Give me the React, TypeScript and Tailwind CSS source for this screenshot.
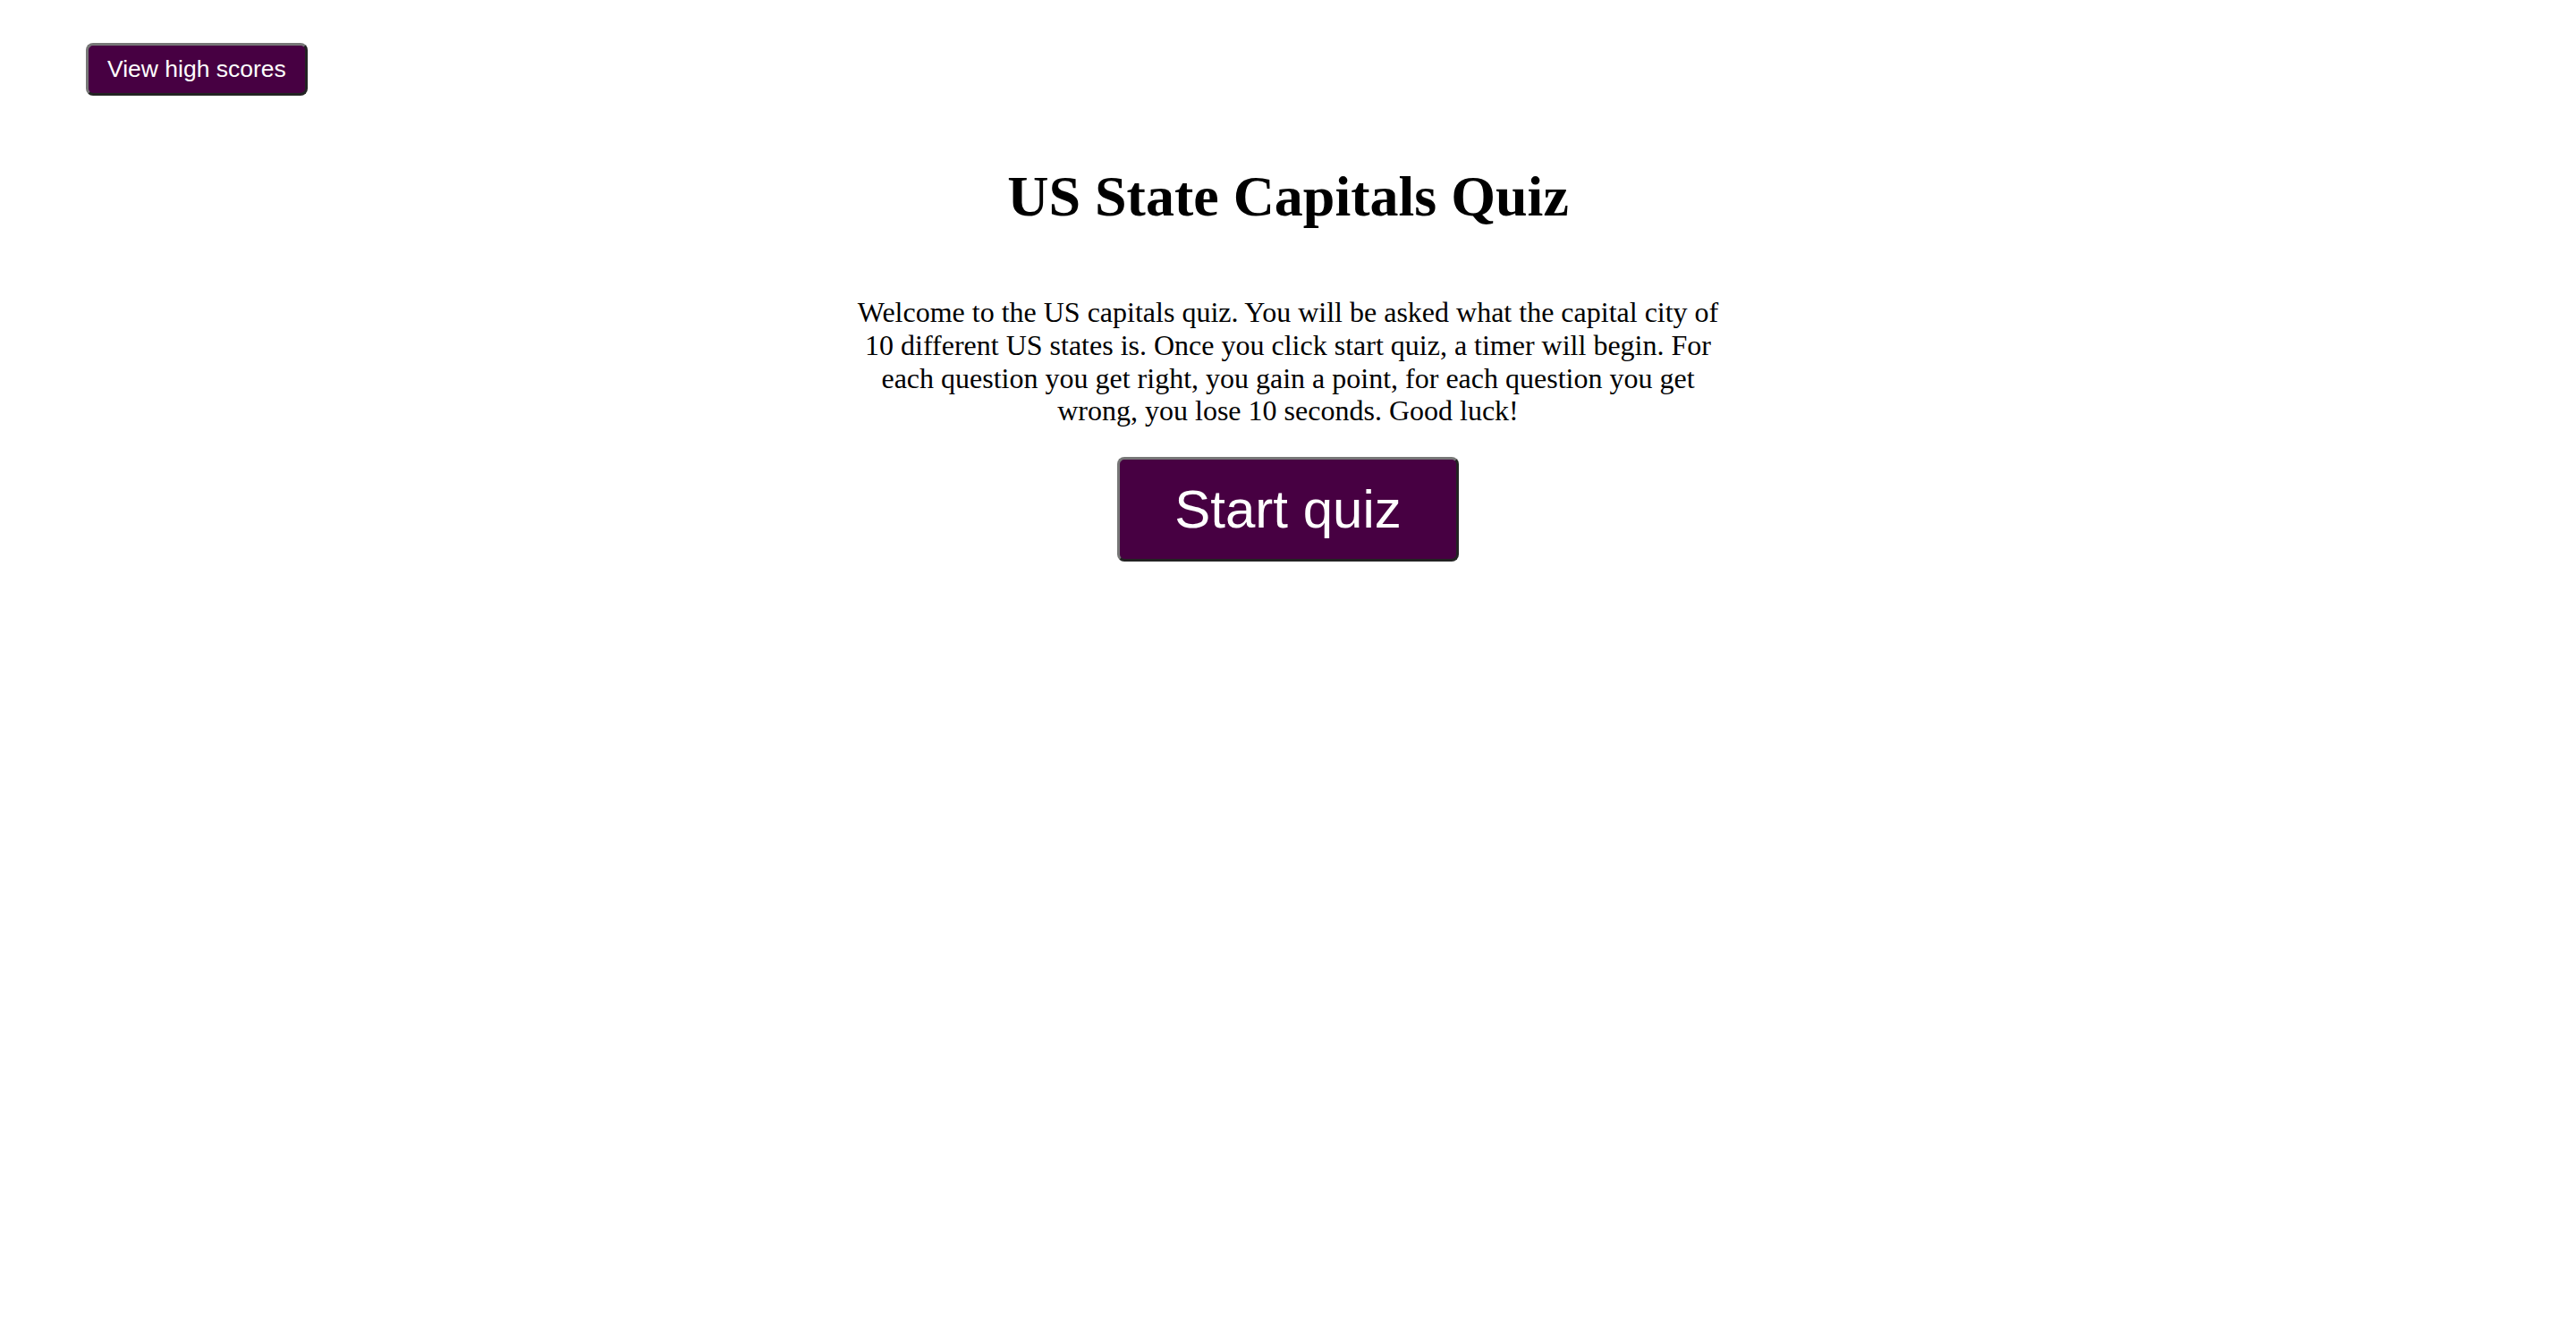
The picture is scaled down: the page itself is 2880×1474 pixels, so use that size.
import React from 'react';

const serif = "font-['Liberation_Serif','Times_New_Roman',serif]";
const sans = "font-['Liberation_Sans',Arial,sans-serif]";

const btnBorder =
  'border-[3px] border-solid border-t-[#777777] border-l-[#777777] border-r-[#232323] border-b-[#232323] rounded-[8px] bg-[#470042] text-white';

const App: React.FC = () => {
  return (
    <div className="min-h-screen bg-white text-black">
      <header className="pt-[48px] pl-[96px]">
        <button className={`${btnBorder} ${sans} text-[26.5px] leading-[31px] px-[21px] py-[11px]`}>
          View high scores
        </button>
      </header>

      <main className="flex flex-col items-center">
        <h1 className={`${serif} mt-[76px] text-[64px] font-bold leading-[74px] text-center`}>
          US State Capitals Quiz
        </h1>
        <p className={`${serif} mt-[74px] w-[1000px] text-[32px] leading-[36.8px] text-center`}>
          Welcome to the US capitals quiz. You will be asked what the capital city of 10 different US states is.
          Once you click start quiz, a timer will begin. For each question you get right, you gain a point, for
          each question you get wrong, you lose 10 seconds. Good luck!
        </p>
        <button className={`${btnBorder} ${sans} mt-[33px] text-[60px] leading-[70px] px-[61px] py-[20px] h-[117px]`}>
          Start quiz
        </button>
      </main>
    </div>
  );
};

export default App;
